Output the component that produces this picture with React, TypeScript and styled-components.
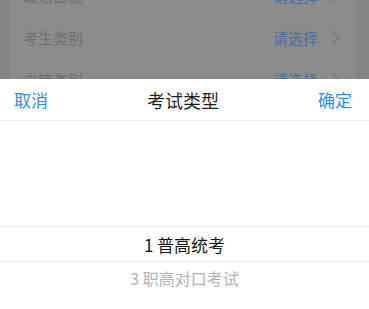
import React from "react";
import styled, { createGlobalStyle } from "styled-components";

const Global = createGlobalStyle`
  html, body { margin: 0; padding: 0; }
  body {
    font-family: "Noto Sans CJK SC", "Noto Sans", sans-serif;
    background: #858585;
    overflow: hidden;
  }
`;

const Screen = styled.div`
  position: relative;
  width: 100%;
  height: 100vh;
  overflow: hidden;
  background: #858585;
`;

const Card = styled.div`
  margin: -26px 13px 0 10px;
  background: #8b8b8b;
  display: flex;
  flex-direction: column;
`;

const FormRow = styled.div`
  height: 42px;
  flex-shrink: 0;
  display: flex;
  align-items: center;
  padding: 0 16px 0 13px;
  font-size: 15px;
`;

const Label = styled.span`
  flex: 1;
  color: #6f6f6f;
`;

const Value = styled.span`
  color: #4a6ea6;
`;

const Chevron = styled.svg`
  width: 9px;
  height: 15px;
  margin-left: 13px;
`;

const Sheet = styled.div`
  position: absolute;
  left: 0;
  right: 0;
  top: 79px;
  bottom: 0;
  background: #ffffff;
  display: flex;
  flex-direction: column;
  overflow: hidden;
`;

const Header = styled.div`
  height: 42px;
  flex-shrink: 0;
  box-sizing: border-box;
  display: grid;
  grid-template-columns: 1fr auto 1fr;
  align-items: center;
  padding: 0 17px 0 14px;
  border-bottom: 1px solid #ececec;
`;

const Action = styled.span<{ $end?: boolean }>`
  font-size: 17px;
  color: #2b8edb;
  justify-self: ${(p) => (p.$end ? "end" : "start")};
`;

const Title = styled.span`
  font-size: 18px;
  color: #1f1f1f;
`;

const Wheel = styled.div`
  display: flex;
  flex-direction: column;
  flex-shrink: 0;
`;

const Item = styled.div<{ $selected?: boolean }>`
  height: ${(p) => (p.$selected ? "34px" : "35px")};
  flex-shrink: 0;
  display: flex;
  align-items: center;
  justify-content: center;
  font-size: ${(p) => (p.$selected ? "17px" : "16px")};
  color: ${(p) => (p.$selected ? "#151515" : "#b3b3b3")};
  border-top: ${(p) => (p.$selected ? "1px solid #e6e6e6" : "none")};
  border-bottom: ${(p) => (p.$selected ? "1px solid #e6e6e6" : "none")};
`;

const NextItem = styled(Item)`
  height: 31px;
`;

const rows = ["政治面貌", "考生类别", "户籍类别"];

export default function App() {
  return (
    <Screen>
      <Global />
      <Card>
        {rows.map((r) => (
          <FormRow key={r}>
            <Label>{r}</Label>
            <Value>请选择</Value>
            <Chevron viewBox="0 0 9 15">
              <path d="M1.5 1 L8 7.5 L1.5 14" fill="none" stroke="#767676" strokeWidth="1.3" />
            </Chevron>
          </FormRow>
        ))}
        <FormRow />
        <FormRow />
        <FormRow />
        <FormRow />
        <FormRow />
      </Card>
      <Sheet>
        <Header>
          <Action>取消</Action>
          <Title>考试类型</Title>
          <Action $end>确定</Action>
        </Header>
        <Wheel>
          <Item />
          <Item />
          <Item />
          <Item $selected>1 普高统考</Item>
          <NextItem>3 职高对口考试</NextItem>
          <Item />
        </Wheel>
      </Sheet>
    </Screen>
  );
}
